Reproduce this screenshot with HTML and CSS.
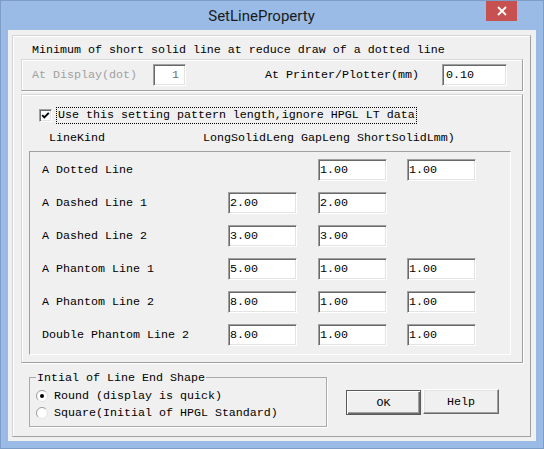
FILE: index.html
```html
<!DOCTYPE html>
<html>
<head>
<meta charset="utf-8">
<title>SetLineProperty</title>
<link rel="stylesheet" href="styles.css">
</head>
<body>
<div class="window">
  <div class="titlebar">
    <div class="title">SetLineProperty</div>
    <div class="close"><svg width="10" height="10" viewBox="0 0 10 10"><path d="M1 1L9 9M9 1L1 9" stroke="#fff" stroke-width="1.8" fill="none"/></svg></div>
  </div>
  <div class="client">
    <div class="frame">
      <div class="heading">Minimum of short solid line at reduce draw of a dotted line</div>
      <div class="box box-min">
        <span class="lbl-display">At Display(dot)</span>
        <input class="field field-dot" value="1" disabled>
        <span class="lbl-printer">At Printer/Plotter(mm)</span>
        <input class="field field-mm" value="0.10">
      </div>
      <div class="box box-pattern">
        <div class="check-row">
          <span class="checkbox"><svg width="9" height="9" viewBox="0 0 9 9"><path d="M1.2 4.2L3.3 6.4L7.8 1.8" stroke="#000" stroke-width="1.9" fill="none"/></svg></span>
          <span class="check-label">Use this setting pattern length,ignore HPGL LT data</span>
        </div>
        <div class="col-head"><span class="head-kind">LineKind</span><span>LongSolidLeng GapLeng ShortSolidLmm)</span></div>
        <div class="table">
          <div class="row"><span>A Dotted Line</span><span></span><input class="field" value="1.00"><input class="field" value="1.00"></div>
          <div class="row"><span>A Dashed Line 1</span><input class="field" value="2.00"><input class="field" value="2.00"><span></span></div>
          <div class="row"><span>A Dashed Line 2</span><input class="field" value="3.00"><input class="field" value="3.00"><span></span></div>
          <div class="row"><span>A Phantom Line 1</span><input class="field" value="5.00"><input class="field" value="1.00"><input class="field" value="1.00"></div>
          <div class="row"><span>A Phantom Line 2</span><input class="field" value="8.00"><input class="field" value="1.00"><input class="field" value="1.00"></div>
          <div class="row"><span>Double Phantom Line 2</span><input class="field" value="8.00"><input class="field" value="1.00"><input class="field" value="1.00"></div>
        </div>
      </div>
      <div class="bottom">
        <div class="shape">
          <span class="shape-title">Intial of Line End Shape</span>
          <div class="radio-row first">
            <svg class="radio" width="12" height="12" viewBox="0 0 12 12"><circle cx="6" cy="6" r="5.5" fill="#fff"/><path d="M2.1 9.9A5.5 5.5 0 0 1 9.9 2.1" stroke="#9a9a9a" fill="none"/><path d="M9.9 2.1A5.5 5.5 0 0 1 2.1 9.9" stroke="#e3e3e3" fill="none"/><circle cx="6" cy="6" r="2" fill="#000"/></svg>
            <span>Round (display is quick)</span>
          </div>
          <div class="radio-row">
            <svg class="radio" width="12" height="12" viewBox="0 0 12 12"><circle cx="6" cy="6" r="5.5" fill="#fff"/><path d="M2.1 9.9A5.5 5.5 0 0 1 9.9 2.1" stroke="#9a9a9a" fill="none"/><path d="M9.9 2.1A5.5 5.5 0 0 1 2.1 9.9" stroke="#e3e3e3" fill="none"/></svg>
            <span>Square(Initial of HPGL Standard)</span>
          </div>
        </div>
        <div class="buttons">
          <button class="btn btn-default">OK</button>
          <button class="btn btn-help">Help</button>
        </div>
      </div>
    </div>
  </div>
</div>
</body>
</html>
```
FILE: styles.css
```css
* { box-sizing: border-box; }
html, body { margin: 0; padding: 0; }
body {
  width: 544px;
  height: 449px;
  overflow: hidden;
  background: #99bbe6;
  font-family: "Liberation Mono", monospace;
  font-size: 11.67px;
  line-height: 14px;
  color: #000;
}
.window {
  width: 544px;
  height: 449px;
  background: #99bbe6;
  border: 1px solid #7d9cc6;
  display: flex;
  flex-direction: column;
}
.titlebar {
  height: 29px;
  display: flex;
  align-items: flex-start;
}
.title {
  flex: 1;
  font-family: Roboto, "Noto Sans", sans-serif;
  font-size: 15px;
  line-height: 30px;
  text-align: center;
  padding-left: 36px;
  color: #1b1b1b;
}
.close {
  width: 31px;
  height: 20px;
  background: #c75050;
  display: flex;
  align-items: center;
  justify-content: center;
  margin-right: 26px;
}
.client {
  margin: 0 7px 7px 7px;
  height: 411px;
  background: #f0f0f0;
  padding: 5px 5px 5px 4px;
}
.frame {
  width: 519px;
  height: 402px;
  border: 1px solid;
  border-color: #d5d5d5 #a0a0a0 #a0a0a0 #d5d5d5;
  box-shadow: inset 1px 1px #fff;
  padding: 7px 7px 0 8px;
}
.heading {
  padding-left: 11px;
  height: 14px;
}
.box {
  border: 1px solid;
  border-color: #d8d8d8 #a0a0a0 #a0a0a0 #d8d8d8;
  box-shadow: 1px 1px 0 #fff, inset 1px 1px #fff;
}
.box-min {
  margin-top: 2px;
  height: 32px;
  display: flex;
  align-items: center;
  padding-left: 10px;
}
.lbl-display {
  width: 121px;
  color: #a0a0a0;
}
.lbl-printer {
  width: 177px;
  margin-left: 79px;
}
.field {
  height: 22px;
  margin: 0;
  border: 1px solid;
  border-color: #a0a0a0 #fff #fff #a0a0a0;
  box-shadow: inset 1px 1px #696969, inset -1px -1px #e3e3e3;
  background: #fff;
  font: inherit;
  color: #000;
  padding: 0 0 0 1px;
  outline: none;
}
.field-dot {
  width: 33px;
  text-align: right;
  padding: 0 6px 0 0;
  color: #6d6d6d;
}
.field-mm {
  width: 65px;
  padding-left: 3px;
}
.box-pattern {
  margin-top: 3px;
  height: 269px;
  padding-top: 12px;
}
.check-row {
  display: flex;
  align-items: center;
  height: 17px;
  padding-left: 17px;
}
.checkbox {
  width: 13px;
  height: 13px;
  border: 1px solid;
  border-color: #a0a0a0 #fff #fff #a0a0a0;
  box-shadow: inset 1px 1px #696969, inset -1px -1px #e3e3e3;
  background: #fff;
  display: flex;
  align-items: center;
  justify-content: center;
}
.check-label {
  margin-left: 4px;
  height: 17px;
  line-height: 15px;
  border: 1px dotted #000;
  padding: 0 1px;
}
.col-head {
  margin-top: 7px;
  height: 14px;
  padding-left: 27px;
  display: flex;
}
.head-kind { width: 154px; }
.table {
  margin: 6px 0 0 7px;
  width: 482px;
  height: 204px;
  border: 1px solid;
  border-color: #a0a0a0 #fff #fff #a0a0a0;
  padding: 1px 0 0 12px;
}
.row {
  display: grid;
  grid-template-columns: 186px 90px 89px 69px;
  height: 33px;
  align-items: center;
}
.row .field { width: 69px; }
.bottom {
  display: flex;
  align-items: flex-start;
  margin-top: 14px;
}
.shape {
  width: 298px;
  height: 50px;
  margin-left: 8px;
  border: 1px solid #aaaaaa;
  box-shadow: 1px 1px 0 #fff;
  padding-left: 6px;
}
.shape-title {
  display: block;
  width: fit-content;
  height: 14px;
  margin-top: -7px;
  padding: 0 1px;
  background: #f0f0f0;
}
.radio-row {
  display: flex;
  align-items: center;
  height: 17px;
}
.radio-row.first { margin-top: 2px; }
.radio { margin-right: 6px; flex: none; }
.buttons {
  display: flex;
  align-items: flex-start;
  margin: 13px 0 0 19px;
  gap: 2px;
}
.btn {
  width: 75px;
  height: 25px;
  padding: 0;
  font: inherit;
  color: #000;
  background: #f0f0f0;
  border: 1px solid;
  border-color: #fff #696969 #696969 #fff;
  box-shadow: inset -1px -1px #a0a0a0, inset 1px 1px #e3e3e3;
}
.btn-default {
  border-color: #5a5a5a;
  box-shadow: inset 1px 1px #fff, inset -1px -1px #696969, inset -2px -2px #a0a0a0;
}
.btn-help {
  width: 76px;
  margin-top: -1px;
}
```
